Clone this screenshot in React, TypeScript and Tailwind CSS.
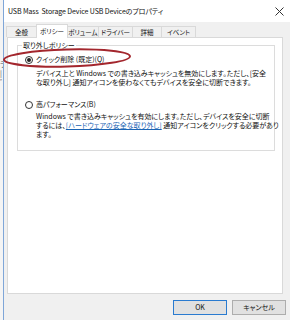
import React from "react";

const jp = "font-['Meiryo_UI','Noto_Sans_CJK_JP',sans-serif] [font-feature-settings:'palt']";

function Tab({ label, selected, w }: { label: string; selected?: boolean; w: string }) {
  return (
    <div
      className={
        selected
          ? `${w} h-[14px] -mb-px bg-white border border-b-0 border-[#d9d9d9] flex items-center justify-center relative z-10 shrink-0`
          : `${w} h-[11px] bg-[#f0f0f0] border border-b-0 border-[#d9d9d9] -ml-px flex items-center justify-center shrink-0`
      }
    >
      <span className="text-[6.5px] leading-none text-[#111] whitespace-nowrap">{label}</span>
    </div>
  );
}

function Radio({ checked }: { checked?: boolean }) {
  return (
    <div className="w-[8px] h-[8px] rounded-full border border-[#333] bg-white flex items-center justify-center shrink-0">
      {checked && <div className="w-[4px] h-[4px] rounded-full bg-[#222]" />}
    </div>
  );
}

export default function App() {
  return (
    <div className={`w-[290px] h-[320px] overflow-hidden flex relative ${jp}`}>
      {/* background window strip */}
      <div className="w-[3px] shrink-0 bg-[#f4f4f4] flex flex-col overflow-hidden">
        <div className="h-[60px]" />
        <div className="text-[7px] leading-[9px] text-[#555]">ラ<br />|<br />ﾞ<br /></div>
      </div>
      <div className="w-[1px] shrink-0 bg-[#7fa6d8]" />
      <div className="flex-1 min-w-0 flex flex-col bg-[#f0f0f0]">
        {/* title bar */}
        <div className="h-[22px] bg-white flex items-center pl-[4px] pr-[6px]">
          <span className="text-[7px] text-[#111] whitespace-nowrap tracking-[-0.1px]">
            USB Mass&nbsp; Storage Device USB Deviceのプロパティ
          </span>
          <div className="flex-1" />
          <svg width="9" height="9" viewBox="0 0 9 9" className="mt-[1px]">
            <path d="M0.5 0.5 L8.5 8.5 M8.5 0.5 L0.5 8.5" stroke="#333" strokeWidth="1" />
          </svg>
        </div>
        {/* tabs */}
        <div className="pl-[3px] pr-[7px] flex flex-col">
          <div className="flex items-end h-[14px] mt-[1px]">
            <Tab label="全般" w="w-[31px]" />
            <Tab label="ポリシー" selected w="w-[32px] -ml-px" />
            <Tab label="ボリューム" w="w-[32px]" />
            <Tab label="ドライバー" w="w-[35px]" />
            <Tab label="詳細" w="w-[30px]" />
            <Tab label="イベント" w="w-[35px]" />
          </div>
          {/* panel */}
          <div className="h-[257px] bg-white border border-[#d9d9d9] pt-[7px] pl-[9px] pr-[7px]">
            <div className="border border-[#dcdcdc] h-[106px] relative pt-[9px] pl-[7px]">
              <div className="absolute -top-[6px] left-[4px] bg-white px-[1px] text-[7px] leading-[10px] text-[#111] whitespace-nowrap">
                取り外しポリシー
              </div>
              <div className="flex items-center gap-[3px] h-[9px]">
                <Radio checked />
                <span className="text-[7px] leading-[9px] text-[#111] whitespace-nowrap">クイック削除 (既定)(Q)</span>
              </div>
              <div className="pl-[11px] mt-[5px] text-[7px] leading-[9px] text-[#111] whitespace-nowrap">
                <div>デバイス上と Windows での書き込みキャッシュを無効にします。ただし、[安全</div>
                <div>な取り外し] 通知アイコンを使わなくてもデバイスを安全に切断できます。</div>
              </div>
              <div className="flex items-center gap-[3px] h-[9px] mt-[13px]">
                <Radio />
                <span className="text-[7px] leading-[9px] text-[#111] whitespace-nowrap">高パフォーマンス(B)</span>
              </div>
              <div className="pl-[11px] mt-[3px] text-[7px] leading-[9px] text-[#111] whitespace-nowrap">
                <div>Windows で書き込みキャッシュを有効にします。ただし、デバイスを安全に切断</div>
                <div>
                  するには、<span className="text-[#1a64b4] underline">[ハードウェアの安全な取り外し]</span> 通知アイコンをクリックする必要があり
                </div>
                <div>ます。</div>
              </div>
            </div>
          </div>
        </div>
        {/* buttons */}
        <div className="flex justify-end gap-[5px] mt-[6px] pr-[4px]">
          <div className="w-[54px] h-[15px] bg-[#e1e1e1] border border-[#2a7bd0] flex items-center justify-center text-[7px] text-[#111]">
            OK
          </div>
          <div className="w-[54px] h-[15px] bg-[#e1e1e1] border border-[#adadad] flex items-center justify-center text-[7px] text-[#111]">
            キャンセル
          </div>
        </div>
      </div>
      {/* red ellipse annotation */}
      <svg className="absolute left-0 top-0 pointer-events-none" width="290" height="320">
        <ellipse cx="67" cy="58" rx="63" ry="8.5" fill="none" stroke="#a3262d" strokeWidth="2" transform="rotate(-1.5 67 58)" />
      </svg>
    </div>
  );
}
